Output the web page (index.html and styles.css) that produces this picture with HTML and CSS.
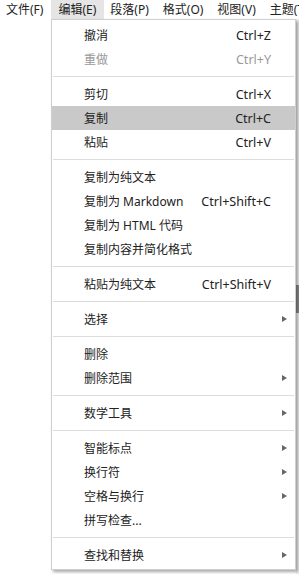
FILE: index.html
```html
<!DOCTYPE html>
<html>
<head>
	<meta charset="utf-8">
	<title>编辑</title>
	<link rel="stylesheet" href="styles.css">
</head>
<body>
	<div class="menubar">
		<div class="mb-item">文件(F)</div>
		<div class="mb-item active">编辑(E)</div>
		<div class="mb-item">段落(P)</div>
		<div class="mb-item">格式(O)</div>
		<div class="mb-item">视图(V)</div>
		<div class="mb-item">主题(T)</div>
	</div>
	<div class="workspace">
		<div class="doc"></div>
		<div class="scrollbar"><div class="thumb"></div></div>

		<div class="menu">
			<div class="item"><span class="label">撤消</span><span class="key">Ctrl+Z</span></div>
			<div class="item disabled"><span class="label">重做</span><span class="key">Ctrl+Y</span></div>
			<div class="sep"></div>
			<div class="item"><span class="label">剪切</span><span class="key">Ctrl+X</span></div>
			<div class="item hover"><span class="label">复制</span><span class="key">Ctrl+C</span></div>
			<div class="item"><span class="label">粘贴</span><span class="key">Ctrl+V</span></div>
			<div class="sep"></div>
			<div class="item"><span class="label">复制为纯文本</span></div>
			<div class="item"><span class="label">复制为 Markdown</span><span class="key">Ctrl+Shift+C</span></div>
			<div class="item"><span class="label">复制为 HTML 代码</span></div>
			<div class="item"><span class="label">复制内容并简化格式</span></div>
			<div class="sep"></div>
			<div class="item"><span class="label">粘贴为纯文本</span><span class="key">Ctrl+Shift+V</span></div>
			<div class="sep"></div>
			<div class="item"><span class="label">选择</span><span class="arrow"></span></div>
			<div class="sep"></div>
			<div class="item"><span class="label">删除</span></div>
			<div class="item"><span class="label">删除范围</span><span class="arrow"></span></div>
			<div class="sep"></div>
			<div class="item"><span class="label">数学工具</span><span class="arrow"></span></div>
			<div class="sep"></div>
			<div class="item"><span class="label">智能标点</span><span class="arrow"></span></div>
			<div class="item"><span class="label">换行符</span><span class="arrow"></span></div>
			<div class="item"><span class="label">空格与换行</span><span class="arrow"></span></div>
			<div class="item"><span class="label">拼写检查...</span></div>
			<div class="sep"></div>
			<div class="item"><span class="label">查找和替换</span><span class="arrow"></span></div>
		</div>
	</div>
</body>
</html>
```

FILE: styles.css
```css
* {
	box-sizing: border-box;
}
html, body {
	height: 100%;
	overflow: hidden;
}
body {
	margin: 0;
	background-color: #fff;
	color: #222;
	font-family: "Noto Sans", "Noto Sans CJK SC", sans-serif;
	font-size: 12px;
}
.menubar {
	display: flex;
	height: 19px;
	white-space: nowrap;
	overflow: hidden;
}
.mb-item {
	flex-shrink: 0;
	padding: 0 8px 0 6px;
	line-height: 19px;
	font-size: 12px;
}
.mb-item.active {
	background-color: #e5e5e5;
	padding-left: 7px;
	padding-right: 8px;
}
.workspace {
	position: relative;
	display: flex;
	height: calc(100% - 19px);
}
.doc {
	flex: 1;
}
.scrollbar {
	width: 3px;
	background-color: #efefef;
}
.thumb {
	margin-top: 266px;
	height: 28px;
	background-color: #8a8a8a;
}
/* dropdown over the document */
.menu {
	position: absolute;
	top: 0;
	left: 51px;
	width: 245px;
	padding: 3px 0 2px;
	background-color: #fff;
	border: 1px solid #cfcfcf;
	box-shadow: 2px 2px 3px rgba(0, 0, 0, 0.35);
}
.item {
	display: flex;
	align-items: center;
	height: 24px;
	padding: 0 8px 0 32px;
	white-space: nowrap;
}
.item.hover {
	background-color: #c9c9c9;
}
.item.disabled {
	color: #999;
}
.label {
	flex: 1;
}
.key {
	margin-right: 16px;
	font-size: 12.5px;
}
.arrow {
	width: 0;
	height: 0;
	border-left: 5px solid #666;
	border-top: 3.5px solid transparent;
	border-bottom: 3.5px solid transparent;
}
.sep {
	height: 1px;
	margin: 5px 1px 5px 1px;
	background-color: #dcdcdc;
}
```
